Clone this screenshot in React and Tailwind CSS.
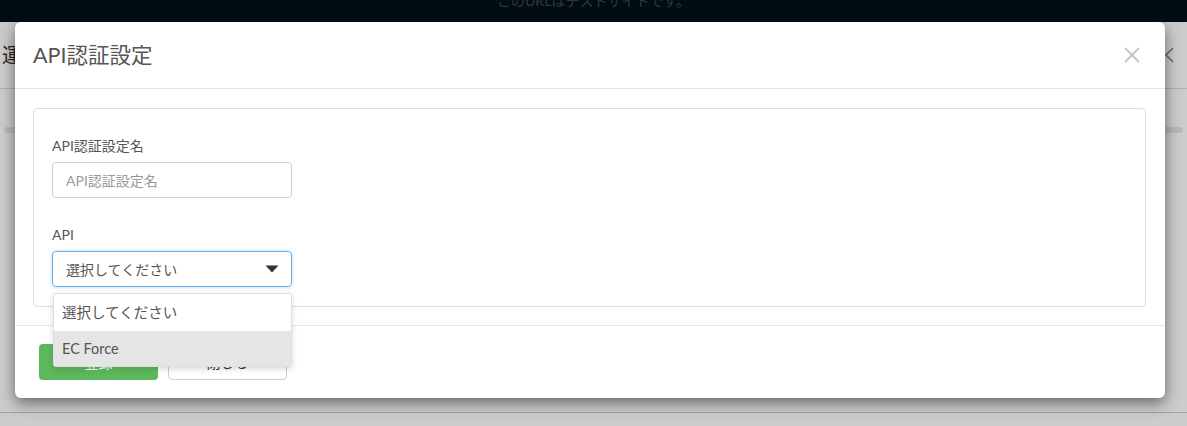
export default function App() {
  const font = { fontFamily: 'Lato, "Noto Sans CJK JP", sans-serif' };

  return (
    <div className="relative h-[426px] w-full overflow-hidden bg-white" style={font}>
      {/* page behind the modal */}
      <div className="flex h-[22px] items-start justify-center overflow-hidden bg-[#01111b]">
        <span className="-mt-[9px] text-[14px] leading-[20px] text-[#444444]">このURLはテストサイトです。</span>
      </div>
      <div className="flex h-[67px] items-center justify-between border-b border-[#dddddd] pl-[2px] pr-[12px]">
        <span className="text-[20px] text-[#333333]">運用設定</span>
        <svg width="12" height="18" viewBox="0 0 12 18" fill="none" stroke="#888888" strokeWidth="1.6">
          <path d="M10 2 L3 9 L10 16" />
        </svg>
      </div>
      <div className="mx-[4px] mt-[38px] h-[6px] rounded-full bg-[#e8e8e8]" />
      <div className="mt-[279px] border-t border-[#cccccc]" />

      {/* backdrop */}
      <div className="absolute inset-0 bg-black/20" />

      {/* modal */}
      <div className="absolute left-[15px] top-[22px] flex h-[376px] w-[1150px] flex-col rounded-[6px] bg-white shadow-[0_5px_15px_rgba(0,0,0,0.5)]">
        <div className="flex h-[67px] items-center justify-between border-b border-[#e5e5e5] pl-[18px] pr-[24px]">
          <h4 className="text-[21.5px] text-[#555555]">API認証設定</h4>
          <svg width="18" height="18" viewBox="0 0 18 18" stroke="#c4c4c4" strokeWidth="1.8">
            <path d="M2 2 L16 16 M16 2 L2 16" />
          </svg>
        </div>

        <div className="px-[18px] pr-[19px] pt-[19px]">
          <div className="rounded-[4px] border border-[#dddddd] px-[18px] pb-[19px] pt-[25px]">
            <label className="block text-[14px] leading-[24px] text-[#555555]">API認証設定名</label>
            <input
              className="mt-[4px] block h-[36px] w-[240px] rounded-[4px] border border-[#cccccc] px-[13px] text-[14px] text-[#555555] placeholder:text-[#999999] outline-none"
              placeholder="API認証設定名"
            />
            <label className="mt-[25px] block text-[14px] leading-[24px] text-[#555555]">API</label>
            <div className="relative mt-[4px] w-[240px]">
              <div className="flex h-[36px] items-center justify-between rounded-[4px] border border-[#66afe9] pl-[13px] pr-[12px] text-[14px] text-[#555555] shadow-[0_0_4px_rgba(102,175,233,0.45)]">
                <span>選択してください</span>
                <svg width="14" height="8" viewBox="0 0 14 8">
                  <path d="M0.5 0.5 H13.5 L7 7.5 Z" fill="#333333" />
                </svg>
              </div>
              <ul className="absolute left-[1px] top-[42px] z-10 w-[239px] overflow-hidden rounded-[3px] border border-[#dddddd] bg-white text-[14.5px] text-[#555555] shadow-[0_2px_6px_rgba(0,0,0,0.15)]">
                <li className="flex h-[37px] items-center px-[8px]">選択してください</li>
                <li className="flex h-[35px] items-center bg-[#e5e5e5] px-[8px]">EC Force</li>
              </ul>
            </div>
          </div>
        </div>

        <div className="mt-[18px] flex gap-[10px] border-t border-[#e5e5e5] px-[24px] pt-[18px]">
          <button className="h-[36px] w-[119px] rounded-[4px] bg-[#5cb85c] text-[14px] text-white">登録</button>
          <button className="h-[36px] w-[119px] rounded-[4px] border border-[#cccccc] bg-white text-[14px] text-[#333333]">閉じる</button>
        </div>
      </div>
    </div>
  );
}
